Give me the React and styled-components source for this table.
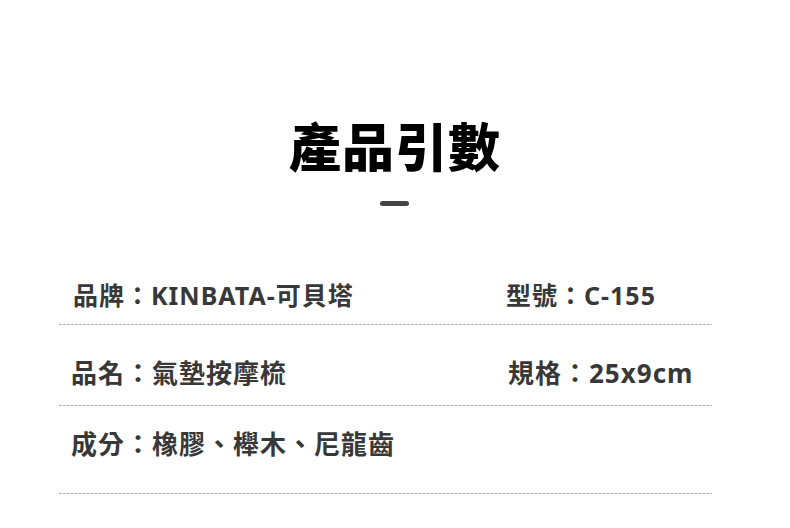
import React from 'react';
import styled, { createGlobalStyle } from 'styled-components';

const GlobalStyle = createGlobalStyle`
  html, body {
    margin: 0;
    padding: 0;
    background: #ffffff;
  }
  body {
    font-family: "Noto Sans", "Noto Sans CJK TC", sans-serif;
  }
`;

const specs = [
  { left: '品牌：KINBATA-可貝塔', right: '型號：C-155', top: 0, bottom: 14, size: 25 },
  { left: '品名：氣墊按摩梳', right: '規格：25x9cm', top: 33, bottom: 17, size: 26, shift: -2 },
  { left: '成分：橡膠、櫸木、尼龍齒', right: '', top: 23, bottom: 34, size: 26, shift: -2 },
];

const App = () => {
  return (
    <>
      <GlobalStyle />
      <Page>
        <Header>
          <Title>產品引數</Title>
          <Bar />
        </Header>

        <SpecList>
          {specs.map((s, i) => (
            <SpecRow key={`spec${i}`} $top={s.top} $bottom={s.bottom}>
              <SpecText $size={s.size} $shift={s.shift || 0}>{s.left}</SpecText>
              <SpecText $size={s.size} $shift={s.shift ? -s.shift : 0}>{s.right}</SpecText>
            </SpecRow>
          ))}
        </SpecList>
      </Page>
    </>
  );
};

export default App;

const Page = styled.div`
  width: 790px;
  height: 528px;
  overflow: hidden;
  background: #fff;
`;

const Header = styled.header`
  display: flex;
  flex-direction: column;
  align-items: center;
  padding-top: 117px;
`;

const Title = styled.h1`
  margin: 0;
  font-family: "Noto Sans CJK TC", sans-serif;
  font-size: 52px;
  line-height: 56px;
  font-weight: 900;
  color: #000;
  letter-spacing: 1px;
`;

const Bar = styled.div`
  width: 29px;
  height: 5px;
  border-radius: 3px;
  background: #444;
  margin-top: 28px;
  margin-right: 1px;
`;

const SpecList = styled.section`
  margin: 74px 0 0 59px;
  width: 653px;
`;

const SpecRow = styled.div`
  display: grid;
  grid-template-columns: 433px 1fr;
  padding: ${p => p.$top}px 0 ${p => p.$bottom + 1}px 14px;
  background-image: repeating-linear-gradient(
    to right,
    #b4b4b4 0,
    #b4b4b4 3px,
    transparent 3px,
    transparent 4px
  );
  background-size: 100% 1px;
  background-repeat: no-repeat;
  background-position: bottom left;
`;

const SpecText = styled.div`
  font-size: ${p => p.$size}px;
  line-height: 30px;
  font-weight: 700;
  letter-spacing: 1px;
  color: #383838;
  white-space: nowrap;
  margin-left: ${p => p.$shift}px;
`;
